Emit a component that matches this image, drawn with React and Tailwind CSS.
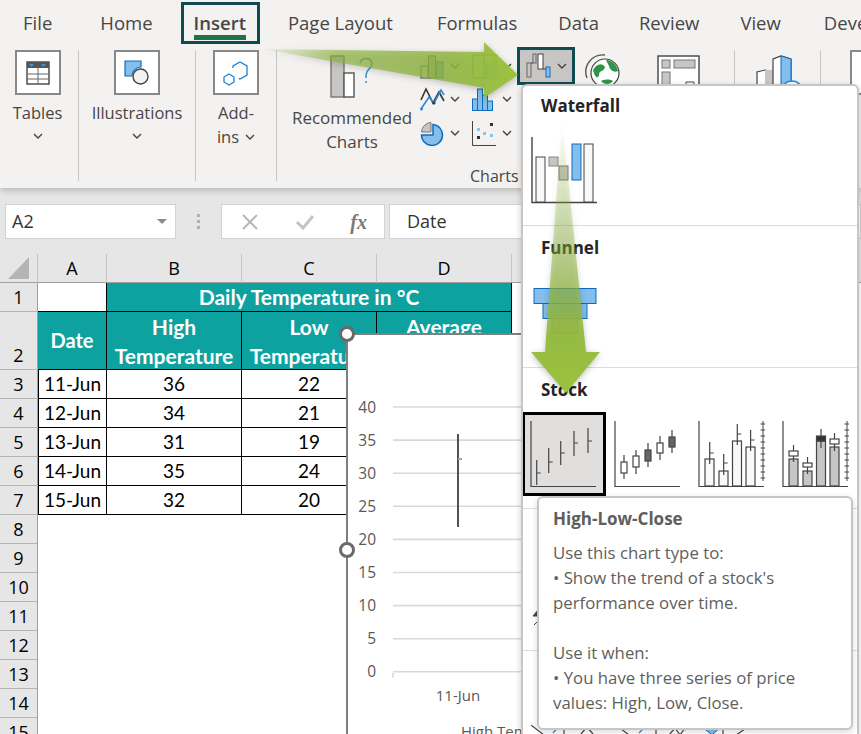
import React from "react";

const tabs = [
  { label: "File", cls: "" },
  { label: "Home", cls: "ml-[7px]" },
  { label: "Insert", cls: "font-semibold" },
  { label: "Page Layout", cls: "ml-px" },
  { label: "Formulas", cls: "ml-[3px]" },
  { label: "Data", cls: "" },
  { label: "Review", cls: "-ml-px" },
  { label: "View", cls: "" },
  { label: "Developer", cls: "ml-[2px]" },
];

const rows = [
  ["11-Jun", "36", "22"],
  ["12-Jun", "34", "21"],
  ["13-Jun", "31", "19"],
  ["14-Jun", "35", "24"],
  ["15-Jun", "32", "20"],
];

const Chevron = ({ className = "" }) => (
  <svg width="10" height="6" viewBox="0 0 10 6" className={className}>
    <path d="M1 1l4 4 4-4" fill="none" stroke="#444" strokeWidth="1.4" />
  </svg>
);

const RibbonBox = ({ children }) => (
  <div className="w-[46px] h-[45px] border-[2px] border-[#8a8886] bg-white flex items-center justify-center">{children}</div>
);

const ColumnIcon = () => (
  <svg width="25" height="25" viewBox="0 0 25 25">
    <rect x="1" y="12" width="7" height="12" fill="#f3f2f1" stroke="#555" />
    <rect x="8.5" y="2" width="7" height="22" fill="#c8c6c4" stroke="#555" />
    <rect x="16" y="8" width="7" height="16" fill="#83beec" stroke="#0f6cbd" />
  </svg>
);
const HierarchyIcon = () => (
  <svg width="25" height="25" viewBox="0 0 25 25">
    <rect x="1" y="1" width="23" height="23" fill="#fff" stroke="#555" />
    <path d="M12 1v23M12 10h12" stroke="#555" fill="none" />
    <rect x="12" y="10" width="12" height="14" fill="#83beec" />
  </svg>
);
const LineIcon = () => (
  <svg width="25" height="24" viewBox="0 0 25 24">
    <path d="M1 13L6 2l7 14 6-11 5 9" fill="none" stroke="#333" strokeWidth="1.6" />
    <path d="M1 22L9 10l5 6 7-13 3 5" fill="none" stroke="#2b88d8" strokeWidth="1.6" />
    <circle cx="1.5" cy="22" r="1.5" fill="#2b88d8" />
    <circle cx="14" cy="16" r="1.5" fill="#333" />
  </svg>
);
const BarIcon = () => (
  <svg width="21" height="23" viewBox="0 0 21 23">
    <g fill="#83beec" stroke="#0f6cbd">
      <rect x="0.5" y="11" width="5" height="11.5" />
      <rect x="5.5" y="1" width="5" height="21.5" />
      <rect x="10.5" y="7" width="5" height="15.5" />
      <rect x="15.5" y="13" width="5" height="9.5" />
    </g>
  </svg>
);
const PieIcon = () => (
  <svg width="25" height="25" viewBox="0 0 25 25">
    <path d="M11 1.5A10 10 0 0 0 1.5 11H11z" fill="#c8c6c4" stroke="#777" />
    <path d="M13 3.5A10.5 10.5 0 1 1 1.5 14H13z" fill="#83beec" stroke="#0f6cbd" strokeWidth="1.5" />
  </svg>
);
const ScatterIcon = () => (
  <svg width="25" height="25" viewBox="0 0 25 25">
    <path d="M0.5 0v24.5H24" fill="none" stroke="#444" />
    <rect x="5" y="7" width="3" height="3" fill="#8cc4f0" />
    <rect x="11" y="11" width="3" height="3" fill="#8cc4f0" />
    <rect x="18" y="13" width="3" height="3" fill="#8cc4f0" />
    <rect x="18" y="2" width="3" height="3" fill="#333" />
    <rect x="5" y="15" width="3" height="3" fill="#333" />
  </svg>
);

const SmallChart = ({ children }) => (
  <div className="flex items-center justify-between w-[40px] h-[30px]">
    {children}
    <Chevron />
  </div>
);

const WaterfallBig = () => (
  <svg width="67" height="67" viewBox="0 0 67 67" className="block">
    <path d="M1 0v65.5H66" fill="none" stroke="#444" strokeWidth="1.4" />
    <rect x="5" y="20" width="9" height="45" fill="#f9f9f9" stroke="#444" />
    <rect x="18" y="20" width="9" height="9" fill="#c8c6c4" stroke="#8a8886" />
    <rect x="28" y="29" width="9" height="14" fill="#c8c6c4" stroke="#777" />
    <rect x="41" y="7" width="9" height="36" fill="#83beec" stroke="#0f6cbd" />
    <rect x="53" y="7" width="9" height="58" fill="#f9f9f9" stroke="#444" />
  </svg>
);

const FunnelBig = () => (
  <svg width="64" height="47" viewBox="0 0 64 47" className="block">
    <rect x="1" y="0.5" width="62" height="15" fill="#83beec" stroke="#0f6cbd" />
    <rect x="10" y="15.5" width="44" height="15" fill="#83beec" stroke="#0f6cbd" />
    <rect x="19" y="30.5" width="26" height="15" fill="#c8c6c4" stroke="#8a8886" />
  </svg>
);

const Axis = () => <path d="M1 0v65.5H66" fill="none" stroke="#444" strokeWidth="1.2" />;

const RightAxis = () => (
  <g stroke="#444" strokeWidth="1">
    <path d="M65 0v60" />
    {[3, 9, 15, 21, 27, 33, 39, 45, 51, 57].map((y) => (
      <path key={y} d="M62.5 0h5" transform={`translate(0 ${y})`} />
    ))}
  </g>
);

const Hlc = ({ marks }) => (
  <g stroke="#444" strokeWidth="1.2" fill="none">
    {marks.map(([x, y1, y2, t]) => (
      <path key={x} d={`M${x} ${y1}V${y2}M${x} ${t}h4`} />
    ))}
  </g>
);

const StockOne = () => (
  <svg width="67" height="67" viewBox="0 0 67 67" className="block">
    <Axis />
    <Hlc marks={[[6.7, 39, 64, 52], [18.7, 27, 52, 41], [30.7, 20, 44, 32], [44, 10, 35, 22], [58, 7, 32, 20]]} />
  </svg>
);

const StockTwo = () => (
  <svg width="67" height="67" viewBox="0 0 67 67" className="block">
    <Axis />
    <g stroke="#444" strokeWidth="1.2">
      {[
        [10, 41, 52, 34, 58, "#fff"],
        [22, 35, 46, 29, 53, "#fff"],
        [34, 29, 40, 22, 46, "#666"],
        [46, 22, 32, 15, 39, "#fff"],
        [58, 16, 26, 9, 32, "#666"],
      ].map(([x, t, b, w1, w2, fill]) => (
        <g key={x}>
          <path d={`M${x} ${w1}V${w2}`} />
          <rect x={x - 3} y={t} width="6" height={b - t} fill={fill} />
        </g>
      ))}
    </g>
  </svg>
);

const bars = [[7, 38], [21, 50], [34.5, 20], [48, 26]];

const StockThree = () => (
  <svg width="67" height="67" viewBox="0 0 67 67" className="block">
    <Axis />
    <RightAxis />
    {bars.map(([x, y]) => (
      <rect key={x} x={x} y={y} width="9" height={65 - y} fill="#f9f9f9" stroke="#444" strokeWidth="1.2" />
    ))}
    <Hlc marks={[[11.7, 21, 43, 32], [25.7, 33, 54, 42], [39.3, 3, 24, 13], [52.6, 9, 30, 19]]} />
  </svg>
);

const StockFour = () => (
  <svg width="67" height="67" viewBox="0 0 67 67" className="block">
    <Axis />
    <RightAxis />
    {bars.map(([x, y]) => (
      <rect key={x} x={x} y={y} width="9" height={65 - y} fill="#c8c6c4" stroke="#444" strokeWidth="1.2" />
    ))}
    <g stroke="#444" strokeWidth="1.2">
      <path d="M11.5 24V41M25.5 36V53M39 8V27M52.500 12V30" />
      <rect x="7" y="30" width="9" height="5" fill="#fff" />
      <rect x="21" y="42" width="9" height="4" fill="#fff" />
      <rect x="34.5" y="15" width="9" height="5" fill="#333" />
      <rect x="48" y="18" width="9" height="5" fill="#fff" />
    </g>
  </svg>
);

const SheetHeader = ({ children, last }) => (
  <div className={`bg-[#e6e6e6] border-b border-b-[#9f9f9f] ${last ? "" : "border-r border-r-[#c6c6c6]"} flex items-center justify-center text-[18px] text-black font-['Open_Sans',sans-serif]`}>
    {children}
  </div>
);

const RowNum = ({ n, end }) => (
  <div className={`bg-[#e6e6e6] border-r border-r-[#9f9f9f] border-b border-b-[#b4b4b4] flex ${end ? "items-end" : "items-center"} justify-center text-[18px] leading-[27px] text-black font-['Open_Sans',sans-serif]`}>
    {n}
  </div>
);

const Cell = ({ children, left }) => (
  <div className={`bg-white border-r border-b border-black ${left ? "border-l" : ""} flex items-center justify-center text-[19px] text-black`}>
    {children}
  </div>
);

const Head = ({ children, small }) => (
  <div className={`bg-[#0da19f] border-r border-b border-black flex items-center justify-center text-center ${small ? "text-[20px]" : "text-[21px]"} leading-[29px] font-bold text-white whitespace-nowrap overflow-hidden`}>
    {children}
  </div>
);

const Sheet = () => (
  <div className="grid grid-cols-[38px_69px_135px_135px_135px_1fr] grid-rows-[29px_29px_58px_repeat(13,29px)] font-['Lato',sans-serif]">
    <SheetHeader>
      <svg width="21" height="22" viewBox="0 0 21 22" className="-ml-px">
        <path d="M21 0v22H0z" fill="#b4b4b4" />
      </svg>
    </SheetHeader>
    <SheetHeader>A</SheetHeader>
    <SheetHeader>B</SheetHeader>
    <SheetHeader>C</SheetHeader>
    <SheetHeader>D</SheetHeader>
    <SheetHeader last />

    <RowNum n="1" />
    <Cell />
    <div className="col-span-3 bg-[#0da19f] border-r border-b border-black flex items-center justify-center text-[21px] font-bold text-white">
      Daily Temperature in °C
    </div>
    <div className="bg-white" />

    <RowNum n="2" end />
    <Head small>Date</Head>
    <Head>High<br />Temperature</Head>
    <Head>Low<br />Temperature</Head>
    <Head>Average<br />Temperature</Head>
    <div className="bg-white" />

    {rows.map((r, i) => (
      <React.Fragment key={r[0]}>
        <RowNum n={i + 3} />
        <Cell left>{r[0]}</Cell>
        <Cell>{r[1]}</Cell>
        <Cell>{r[2]}</Cell>
        <Cell />
        <div className="bg-white" />
      </React.Fragment>
    ))}

    {[8, 9, 10, 11, 12, 13, 14, 15].map((n) => (
      <React.Fragment key={n}>
        <RowNum n={n} />
        <div className="col-span-5 bg-white" />
      </React.Fragment>
    ))}
  </div>
);

const Chart = () => {
  const ticks = [40, 35, 30, 25, 20, 15, 10, 5, 0];
  return (
    <div className="absolute left-[346px] top-[333px] w-[180px] h-[420px] bg-white border-l-[2px] border-t-[2px] border-[#7f7f7f]">
      <svg width="178" height="418" viewBox="0 0 178 418" className="block">
        {ticks.map((t, i) => {
          const y = 72 + i * 33.1;
          return (
            <g key={t}>
              <line x1="45" x2="178" y1={y} y2={y} stroke="#d9d9d9" strokeWidth="1.6" />
              <text x="28" y={y + 5.5} textAnchor="end" fontSize="15.5" fill="#595959" fontFamily="Open Sans, sans-serif">{t}</text>
            </g>
          );
        })}
        <path d="M45 337.8v5" stroke="#d9d9d9" strokeWidth="1.6" />
        <line x1="110" x2="110" y1="99" y2="192" stroke="#404040" strokeWidth="1.8" />
        <line x1="110" x2="114" y1="124" y2="124" stroke="#a6a6a6" strokeWidth="2" />
        <text x="110" y="366" textAnchor="middle" fontSize="15" fill="#595959" fontFamily="Open Sans, sans-serif">11-Jun</text>
        <text x="113" y="402" fontSize="15" fill="#595959" fontFamily="Open Sans, sans-serif">High Temperature</text>
      </svg>
    </div>
  );
};

const Handle = ({ className }) => (
  <div className={`absolute w-[16px] h-[16px] rounded-full bg-white border-[3px] border-[#6a6a6a] ${className}`} />
);

const SectionTitle = ({ children }) => (
  <div className="h-[24px] leading-[24px] text-[17px] font-bold text-[#252423] pl-[18px]">{children}</div>
);

const Dropdown = () => (
  <div className="absolute left-[521px] top-[84px] w-[338px] h-[660px] bg-white border-[2px] border-[#c8c6c4] rounded-t-[6px] overflow-hidden shadow-[0_2px_6px_rgba(0,0,0,0.2)]">
    <div className="h-[140px] border-b border-[#dedcda] pt-[8px]">
      <SectionTitle>Waterfall</SectionTitle>
      <div className="mt-[19px] ml-[8px]">
        <WaterfallBig />
      </div>
    </div>
    <div className="h-[142px] border-b border-[#dedcda] pt-[10px]">
      <SectionTitle>Funnel</SectionTitle>
      <div className="mt-[28px] ml-[10px]">
        <FunnelBig />
      </div>
    </div>
    <div className="h-[141px] border-b border-[#dedcda] pt-[10px]">
      <SectionTitle>Stock</SectionTitle>
      <div className="mt-[10px] flex">
        <div className="w-[84px] h-[84px] border-[3px] border-black bg-[#e1dfdd] flex items-center justify-center -ml-px">
          <StockOne />
        </div>
        <div className="w-[84px] h-[84px] flex items-center justify-center">
          <StockTwo />
        </div>
        <div className="w-[84px] h-[84px] flex items-center justify-center">
          <StockThree />
        </div>
        <div className="w-[84px] h-[84px] flex items-center justify-center">
          <StockFour />
        </div>
      </div>
    </div>
    <div className="h-[142px] border-b border-[#dedcda] pt-[100px] pl-[9px]">
      <svg width="8" height="18" viewBox="0 0 8 18" className="block">
        <path d="M1 7l5-6v6zM2 16l4-4" fill="#444" stroke="#444" />
      </svg>
    </div>
    <div className="pt-[74px] pl-[8px] flex gap-[18px]">
      <svg width="240" height="12" viewBox="0 0 240 12" className="block">
        <g fill="none" stroke="#444" strokeWidth="1.2">
          <path d="M0 0l13 10M33 1v10M50 9l6-7 6 7M85 0l13 10M125 1v10M138 10l6-7 5 7 5-7M192 1v10M205 10l12-8" />
          <path d="M22 8l6-7M108 8l7-7M150 1l5 4" stroke="#2b88d8" />
        </g>
        <path d="M169 0h23l-11 10z" fill="#83beec" stroke="#0f6cbd" />
      </svg>
    </div>
  </div>
);

const Tooltip = () => (
  <div className="absolute left-[537px] top-[496px] w-[316px] h-[234px] bg-white border-[2px] border-[#c8c6c4] rounded-[6px] pl-[14px] pt-[9px] text-[#605e5c] text-[16.8px] leading-[25px] shadow-[0_2px_6px_rgba(0,0,0,0.15)]">
    <div className="font-bold text-[17px] leading-[24px]">High-Low-Close</div>
    <div className="mt-[9px]">Use this chart type to:</div>
    <div>• Show the trend of a stock's</div>
    <div>performance over time.</div>
    <div className="h-[25px]" />
    <div>Use it when:</div>
    <div>• You have three series of price</div>
    <div>values: High, Low, Close.</div>
  </div>
);

const Arrows = () => (
  <svg width="861" height="734" viewBox="0 0 861 734" className="absolute left-0 top-0 pointer-events-none drop-shadow-[0_2px_3px_rgba(0,0,0,0.25)]">
    <defs>
      <linearGradient id="arrowRight" gradientUnits="userSpaceOnUse" x1="262" y1="0" x2="518" y2="0">
        <stop offset="0" stopColor="#9bc23c" stopOpacity="0.08" />
        <stop offset="0.3" stopColor="#8fb53c" stopOpacity="0.65" />
        <stop offset="0.7" stopColor="#8fb53c" stopOpacity="0.8" />
        <stop offset="1" stopColor="#9bc23c" stopOpacity="1" />
      </linearGradient>
      <linearGradient id="arrowDown" gradientUnits="userSpaceOnUse" x1="0" y1="120" x2="0" y2="393">
        <stop offset="0" stopColor="#9bc23c" stopOpacity="0" />
        <stop offset="0.45" stopColor="#8fb53c" stopOpacity="0.45" />
        <stop offset="0.8" stopColor="#93ba3c" stopOpacity="0.95" />
        <stop offset="1" stopColor="#9bc23c" stopOpacity="1" />
      </linearGradient>
    </defs>
    <path d="M262 49L484 52V42L518 75L484 98V88Z" fill="url(#arrowRight)" />
    <path d="M562 120L586 352H600L566 393L531 352H545Z" fill="url(#arrowDown)" />
  </svg>
);

export default function App() {
  return (
    <div className="relative w-[861px] h-[734px] overflow-hidden bg-white font-['Open_Sans',sans-serif]">
      {/* Ribbon */}
      <div className="relative z-10 h-[188px] bg-[#f3f2f1] shadow-[0_3px_6px_rgba(0,0,0,0.18)]">
        <div className="h-[47px] flex items-center gap-[41px] pl-[23px] pb-[1px] text-[18.5px] text-[#484644] whitespace-nowrap">
          {tabs.map((t) => (
            <div key={t.label} className={`relative shrink-0 ${t.cls}`}>
              {t.label}
              {t.label === "Insert" && (
                <>
                  <div className="absolute -left-[13px] -right-[14px] -top-[7px] h-[42px] border-[3px] border-[#0f4c52]" />
                  <div className="absolute left-0 right-0 top-[26px] h-[5px] bg-[#217346]" />
                </>
              )}
            </div>
          ))}
        </div>

        <div className="flex h-[134px] pt-[3px] text-[#484644] text-[16.5px] leading-[24px]">
          <div className="w-[79px] shrink-0 h-[131px] border-r border-[#c8c6c4] flex flex-col items-center pr-[3px]">
            <RibbonBox>
              <svg width="24" height="24" viewBox="0 0 24 24">
                <rect x="1" y="1" width="22" height="22" fill="#fff" stroke="#444" strokeWidth="1.4" />
                <rect x="1" y="1" width="22" height="6" fill="#555" />
                <path d="M3 3h5l-2.500 3zM15 3h5l-2.500 3z" fill="#3a96dd" />
                <path d="M1 13h22M1 18h22M12 7v16" stroke="#666" fill="none" />
              </svg>
            </RibbonBox>
            <div className="mt-[6px]">Tables</div>
            <Chevron className="mt-[8px]" />
          </div>

          <div className="w-[117px] shrink-0 h-[131px] border-r border-[#c8c6c4] flex flex-col items-center">
            <RibbonBox>
              <svg width="26" height="26" viewBox="0 0 26 26">
                <path d="M1 1h16v6a9 9 0 0 0-9 9H1z" fill="#83beec" stroke="#0f6cbd" strokeWidth="1.2" />
                <circle cx="16.500" cy="16.500" r="7.500" fill="#f3f2f1" stroke="#444" strokeWidth="1.4" />
              </svg>
            </RibbonBox>
            <div className="mt-[6px]">Illustrations</div>
            <Chevron className="mt-[8px]" />
          </div>

          <div className="w-[81px] shrink-0 h-[131px] border-r border-[#c8c6c4] flex flex-col items-center">
            <RibbonBox>
              <svg width="26" height="26" viewBox="0 0 26 26" fill="none" stroke="#1f7fd1" strokeWidth="1.3">
                <path d="M10 8V6l7-4 7 4v9l-7 4-1-.6" />
                <path d="M6 14l5 3v5l-5 3-5-3v-5z" />
              </svg>
            </RibbonBox>
            <div className="mt-[6px]">Add-</div>
            <div className="flex items-center gap-[6px]">
              ins
              <Chevron />
            </div>
          </div>

          <div className="w-[458px] shrink-0 h-[131px] border-r border-[#c8c6c4] relative flex">
            <div className="w-[143px] pl-[7px] flex flex-col items-center pt-[5px] text-center leading-[24px] text-[17px]">
              <svg width="44" height="44" viewBox="0 0 44 44" className="block">
                <rect x="1" y="1" width="13" height="41" fill="#c8c6c4" stroke="#777" strokeWidth="1.4" />
                <rect x="14" y="18" width="10" height="24" fill="#fff" stroke="#555" strokeWidth="1.4" />
                <path d="M30 8c1-6 12-6 12 1 0 5-6 5-6 11v3M36 26v2" fill="none" stroke="#3a96dd" strokeWidth="1.6" />
              </svg>
              <div className="mt-[7px]">Recommended<br />Charts</div>
            </div>
            <div className="flex flex-col">
              <div className="grid grid-cols-[52px_52px] grid-rows-[32px_34px_34px] items-center">
                <SmallChart><ColumnIcon /></SmallChart>
                <SmallChart><HierarchyIcon /></SmallChart>
                <SmallChart><LineIcon /></SmallChart>
                <SmallChart><BarIcon /></SmallChart>
                <SmallChart><PieIcon /></SmallChart>
                <SmallChart><ScatterIcon /></SmallChart>
              </div>
              <div className="mt-[16px] pl-[50px] text-[16px] leading-[20px]">Charts</div>
            </div>
            <div className="absolute left-[240px] -top-[3px] w-[58px] h-[38px] bg-[#c8c6c4] border-[3px] border-[#0f4c52] flex items-center justify-center gap-[5px]">
              <svg width="26" height="26" viewBox="0 0 26 26">
                <rect x="1" y="10" width="4" height="14" fill="#c8c6c4" stroke="#666" />
                <rect x="7" y="1" width="3" height="9" fill="#c8c6c4" stroke="#666" />
                <rect x="12" y="1" width="5" height="15" fill="#fff" stroke="#444" />
                <rect x="20" y="14" width="4" height="10" fill="#83beec" stroke="#0f6cbd" />
                <path d="M5 10h2M17 16h3" stroke="#444" />
              </svg>
              <Chevron />
            </div>
            <svg width="38" height="36" viewBox="0 0 38 36" className="absolute left-[307px] top-[4px]">
              <path d="M3 24A17 17 0 0 1 21 1" fill="none" stroke="#555" strokeWidth="1.4" />
              <circle cx="21" cy="19" r="14" fill="#fff" stroke="#444" strokeWidth="1.2" />
              <path d="M9 16c3-6 9-8 12-3-1 5-6 3-6 8-1 4-4 3-6-5zM22 6c6 0 11 5 12 11-4 2-8-1-9-5zM17 27c4-2 9-2 12 0-3 4-9 4-12 0z" fill="#2e9448" />
            </svg>
            <svg width="46" height="36" viewBox="0 0 46 36" className="absolute left-[380px] top-[5px]">
              <rect x="1" y="1" width="41" height="40" fill="#fff" stroke="#444" strokeWidth="1.4" />
              <rect x="5" y="5" width="8" height="8" fill="#c8c6c4" stroke="#777" />
              <rect x="17" y="5" width="21" height="8" fill="#c8c6c4" stroke="#777" />
              <rect x="5" y="17" width="8" height="20" fill="#c8c6c4" stroke="#777" />
              <path d="M29 36v-9h8v5h8" fill="#fff" stroke="#444" />
              <path d="M37 32h8" stroke="#0f6cbd" strokeWidth="1.6" />
            </svg>
          </div>

          <div className="w-[86px] shrink-0 h-[131px] border-r border-[#c8c6c4] relative">
            <svg width="46" height="36" viewBox="0 0 46 36" className="absolute left-[20px] top-[3px]">
              <path d="M2 36V19l8-2 8 2v17" fill="#fff" stroke="#444" strokeWidth="1.2" />
              <rect x="10" y="17" width="8" height="19" fill="#c8c6c4" />
              <path d="M18 36V6l8-3 10 3v30" fill="#fff" stroke="#444" strokeWidth="1.2" />
              <path d="M26 3l10 3v26H26z" fill="#83beec" stroke="#0f6cbd" />
              <circle cx="37" cy="39" r="11" fill="#fff" stroke="#2b88d8" strokeWidth="1.4" />
            </svg>
          </div>

          <div className="ml-[29px] w-[46px] shrink-0 h-[45px] border-[2px] border-[#8a8886] bg-white" />
        </div>
      </div>

      {/* Formula bar */}
      <div className="h-[66px] bg-[#e6e6e6] flex items-start pt-[16px] text-[18px] text-[#333]">
        <div className="ml-[5px] w-[171px] h-[35px] bg-white border border-[#d2d2d2] flex items-center justify-between pl-[6px] pr-[8px]">
          A2
          <svg width="10" height="6" viewBox="0 0 10 6">
            <path d="M0 0h10L5 5z" fill="#8a8a8a" />
          </svg>
        </div>
        <div className="w-[45px] h-[35px] flex flex-col items-center justify-center gap-[3px]">
          <div className="w-[3px] h-[3px] bg-[#b0b0b0]" />
          <div className="w-[3px] h-[3px] bg-[#b0b0b0]" />
          <div className="w-[3px] h-[3px] bg-[#b0b0b0]" />
        </div>
        <div className="w-[164px] h-[35px] bg-white border border-[#d2d2d2] flex items-center justify-between pl-[19px] pr-[17px]">
          <svg width="18" height="16" viewBox="0 0 18 16">
            <path d="M2 1l14 14M16 1L2 15" stroke="#b8b8b8" strokeWidth="2" />
          </svg>
          <svg width="20" height="16" viewBox="0 0 20 16">
            <path d="M2 8l6 6L18 2" fill="none" stroke="#c4c4c4" strokeWidth="3" />
          </svg>
          <span className="font-['Liberation_Serif',serif] italic font-bold text-[20px] text-[#7a7a7a]">fx</span>
        </div>
        <div className="ml-[4px] flex-1 h-[35px] bg-white border border-[#d2d2d2] flex items-center pl-[17px]">Date</div>
      </div>

      <Sheet />
      <Chart />
      <Handle className="left-[339px] top-[326px]" />
      <Handle className="left-[339px] top-[542px]" />
      <div className="absolute inset-0 z-20 pointer-events-none">
        <Dropdown />
        <Arrows />
        <Tooltip />
      </div>
    </div>
  );
}
